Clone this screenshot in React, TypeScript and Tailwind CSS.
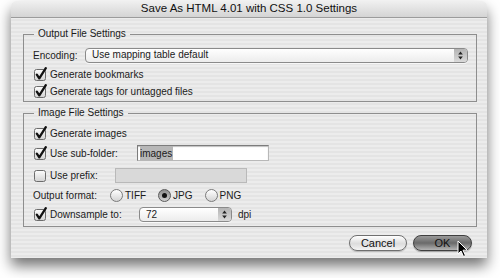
import React from "react";

function CheckBox({ checked }: { checked: boolean }) {
  return (
    <svg width="15" height="15" viewBox="0 0 15 15" className="shrink-0">
      <defs>
        <linearGradient id="cbFill" x1="0" y1="0" x2="0" y2="1">
          <stop offset="0" stopColor="#fdfdfd" />
          <stop offset="1" stopColor="#d2d2d2" />
        </linearGradient>
      </defs>
      <rect x="1.5" y="2.5" width="11" height="11" rx="2" fill="url(#cbFill)" stroke="#6c6c6c" />
      {checked && (
        <path
          d="M3.8 7.6 L6.3 11.4 L12.8 1.2"
          fill="none"
          stroke="#111"
          strokeWidth="2.3"
          strokeLinecap="round"
          strokeLinejoin="round"
        />
      )}
    </svg>
  );
}

function Radio({ on, label }: { on?: boolean; label: string }) {
  return (
    <div className="flex items-center gap-[2px]">
      <span
        className={
          on
            ? "flex h-[13px] w-[13px] items-center justify-center rounded-full border border-[#5a5a5a] bg-[linear-gradient(#8c8c8c,#d0d0d0)]"
            : "flex h-[13px] w-[13px] items-center justify-center rounded-full border border-[#7a7a7a] bg-[linear-gradient(#ffffff,#d4d4d4)]"
        }
      >
        {on && <span className="h-[5px] w-[5px] rounded-full bg-[#111]" />}
      </span>
      <span>{label}</span>
    </div>
  );
}

function Arrows() {
  return (
    <svg width="5" height="9" viewBox="0 0 5 9">
      <path d="M2.5 0.5 L4.8 3.5 L0.2 3.5 Z" fill="#222" />
      <path d="M2.5 8.5 L4.8 5.5 L0.2 5.5 Z" fill="#222" />
    </svg>
  );
}

function Popup({ value, width }: { value: string; width: string }) {
  return (
    <div
      className={`flex h-[15px] ${width} items-center rounded-[4px] border border-[#8a8a8a] bg-[linear-gradient(#ffffff,#ececec)] shadow-[0_1px_0_rgba(255,255,255,0.7)]`}
    >
      <span className="flex-1 pl-[6px] leading-none">{value}</span>
      <span className="flex h-full w-[13px] items-center justify-center rounded-r-[3px] bg-[linear-gradient(#b4b4b4,#dadada)]">
        <Arrows />
      </span>
    </div>
  );
}

export default function App() {
  return (
    <div className="h-[278px] w-[500px] overflow-hidden bg-white font-['Liberation_Sans',Arial,sans-serif] text-[10px] text-[#1b1b1b]">
      <div className="relative ml-[11px] mt-[1px] flex h-[257px] w-[476px] flex-col rounded-t-[6px] bg-[repeating-linear-gradient(#ececec_0px,#ececec_2px,#e4e4e4_2px,#e4e4e4_4px)] shadow-[0_8px_14px_rgba(0,0,0,0.55)]">
        {/* title bar */}
        <div className="flex h-[17px] shrink-0 items-center justify-center rounded-t-[6px] border-b border-[#9b9b9b] bg-[linear-gradient(#f0f0f0,#d4d4d4)] text-[11.5px] text-[#111]">
          Save As HTML 4.01 with CSS 1.0 Settings
        </div>

        <div className="flex flex-col pl-[12px] pr-[10px]">
          {/* output group */}
          <fieldset className="mt-[10px] border border-[#8e8e8e] pb-[1px]">
            <legend className="ml-[10px] px-[4px] leading-[12px]">Output File Settings</legend>
            <div className="flex h-[16px] items-center pl-[9px] mt-[7px]">
              <span className="w-[52px]">Encoding:</span>
              <Popup value="Use mapping table default" width="w-[383px]" />
            </div>
            <div className="mt-[3px] flex h-[17px] items-center gap-[2px] pl-[9px]">
              <CheckBox checked />
              <span>Generate bookmarks</span>
            </div>
            <div className="flex h-[17px] items-center gap-[2px] pl-[9px]">
              <CheckBox checked />
              <span>Generate tags for untagged files</span>
            </div>
          </fieldset>

          {/* image group */}
          <fieldset className="mt-[5px] border border-[#8e8e8e] pb-[2px]">
            <legend className="ml-[10px] px-[4px] leading-[12px]">Image File Settings</legend>
            <div className="mt-[4px] flex h-[20px] items-center gap-[2px] pl-[9px]">
              <CheckBox checked />
              <span>Generate images</span>
            </div>
            <div className="flex h-[20px] items-center gap-[2px] pl-[9px]">
              <CheckBox checked />
              <span className="w-[85px]">Use sub-folder:</span>
              <div className="flex h-[16px] w-[132px] items-center border border-[#7c7c7c] border-b-[#b8b8b8] border-r-[#b8b8b8] bg-white pl-[2px] shadow-[inset_0_1px_1px_rgba(0,0,0,0.25)]">
                <span className="bg-[#b7b7b7] pr-[1px]">images</span>
              </div>
            </div>
            <div className="mt-[2px] flex h-[20px] items-center gap-[2px] pl-[9px]">
              <CheckBox checked={false} />
              <span className="w-[63px]">Use prefix:</span>
              <div className="h-[15px] w-[132px] border border-[#b9b9b9] bg-[#d9d9d9]" />
            </div>
            <div className="flex h-[20px] items-center pl-[9px]">
              <span className="w-[77px]">Output format:</span>
              <div className="flex items-center gap-[12px]">
                <Radio label="TIFF" />
                <Radio on label="JPG" />
                <Radio label="PNG" />
              </div>
            </div>
            <div className="flex h-[19px] items-center gap-[2px] pl-[9px]">
              <CheckBox checked />
              <span className="w-[87px]">Downsample to:</span>
              <Popup value="72" width="w-[93px]" />
              <span className="ml-[4px]">dpi</span>
            </div>
          </fieldset>

          {/* buttons */}
          <div className="mt-[8px] flex justify-end gap-[6px] pr-[5px]">
            <button className="h-[16px] w-[58px] rounded-full border border-[#6f6f6f] bg-[linear-gradient(#ffffff,#dcdcdc_55%,#f4f4f4)] text-[11px] leading-none text-[#111] shadow-[0_1px_1px_rgba(0,0,0,0.2)]">
              Cancel
            </button>
            <button className="h-[16px] w-[59px] rounded-full border border-[#3f3f3f] bg-[linear-gradient(#9a9a9a,#6a6a6a_50%,#b4b4b4)] text-[11px] leading-none text-[#111] shadow-[0_1px_1px_rgba(0,0,0,0.3)]">
              OK
            </button>
          </div>
        </div>

        {/* mouse pointer */}
        <svg
          className="absolute left-[446px] top-[239px]"
          width="12"
          height="18"
          viewBox="0 0 12 18"
        >
          <path
            d="M1 1 L1 14 L4 11 L6.5 16.5 L8.5 15.6 L6 10.2 L10.2 10.2 Z"
            fill="#000"
            stroke="#fff"
            strokeWidth="1"
            strokeLinejoin="round"
          />
        </svg>
      </div>
    </div>
  );
}
